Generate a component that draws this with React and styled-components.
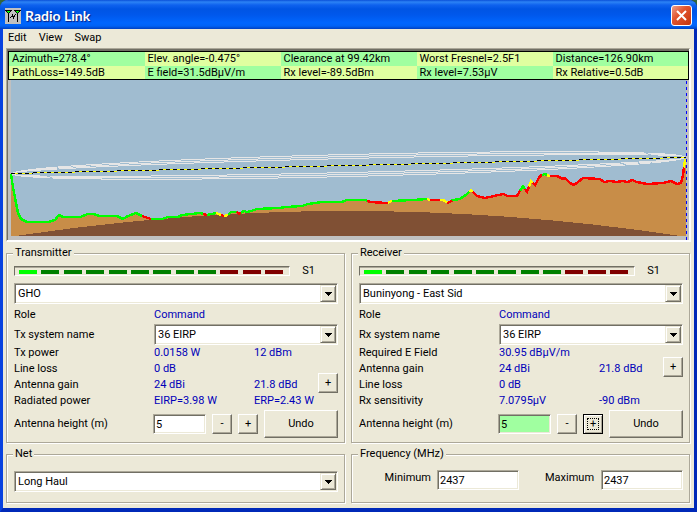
import React from "react";
import styled, { createGlobalStyle } from "styled-components";

const FACE = "#ece9d8";
const SHADE = "#aca899";
const DARK = "#716f64";

const GlobalStyle = createGlobalStyle`
  *, *::before, *::after { box-sizing: border-box; }
  body {
    margin: 0;
    background: #33663a;
    font-family: Roboto, "Liberation Sans", Arial, sans-serif;
    font-size: 11px;
    line-height: 16px;
    color: #000;
  }
  input, select, button { font: inherit; color: inherit; margin: 0; border-radius: 0; outline: 0; }
`;

const Window = styled.main`
  display: flex;
  flex-direction: column;
  min-height: 100vh;
  background: ${FACE};
  border: 3px solid #0842e0;
  border-top: 0;
  border-bottom-width: 4px;
  border-right-color: #0029b8;
  border-bottom-color: #0029b8;
  border-radius: 8px 8px 0 0;
`;

const TitleBar = styled.header`
  display: flex;
  align-items: center;
  gap: 4px;
  height: 29px;
  margin: 0 -3px;
  padding: 2px 5px 0;
  border-radius: 8px 8px 0 0;
  background: linear-gradient(
    #0a50d8 0, #2c83f5 2px, #0f62ee 5px, #0055e4 9px,
    #0058ec 15px, #0066fe 23px, #0062f5 26px, #0040c0 29px
  );
`;

const Title = styled.h1`
  flex: 1;
  margin: 0;
  color: #fff;
  font: bold 14px/18px Lato, "Open Sans", sans-serif;
  text-shadow: 1px 1px 1px #0b1f80;
`;

const CloseButton = styled.button`
  display: grid;
  place-items: center;
  width: 21px;
  height: 21px;
  padding: 0;
  border: 1px solid #fff;
  border-radius: 3px;
  background: linear-gradient(135deg, #eda08c, #e2552f 40%, #c5340c);
`;

const MenuBar = styled.nav`
  display: flex;
  gap: 12px;
  height: 19px;
  padding: 0 5px 1px;
`;

const MenuItem = styled.button`
  padding: 0;
  border: 0;
  background: none;
`;

const Body = styled.div`
  display: flex;
  flex-direction: column;
  flex: 1;
  gap: 4px;
  padding: 0 3px 4px;
`;

const PathPanel = styled.section`
  border: solid;
  border-width: 1px 2px 2px 1px;
  border-color: ${SHADE} #fff #fff ${SHADE};
  background: #c0c0c0;
`;

const PathInner = styled.div`
  border: solid ${DARK};
  border-width: 2px 0 0 1px;
`;

const Readings = styled.table`
  width: 100%;
  table-layout: fixed;
  border-collapse: collapse;
  border: 1px solid #000;
`;

const Reading = styled.td`
  height: 14px;
  padding: 0 0 0 3px;
  line-height: 13px;
  white-space: nowrap;
  background: ${(p) => (p.$green ? "#a0ffa0" : "#e0ffa0")};
`;

const Profile = styled.svg`
  display: block;
  width: 100%;
  height: 160px;
`;

const Columns = styled.div`
  display: grid;
  grid-template-columns: 1fr 1fr;
  gap: 6px;
  padding-right: 1px;
`;

const Group = styled.fieldset`
  min-width: 0;
  margin: 0;
  padding: 0 6px ${(p) => p.$bottom}px 7px;
  border: 1px solid ${SHADE};
  box-shadow: 1px 1px 0 #fff, inset 1px 1px 0 #fff;
`;

const Legend = styled.legend`
  height: 14px;
  padding: 0 2px;
  margin-left: -1px;
  line-height: 14px;
  background: ${FACE};
`;

const MeterRow = styled.div`
  display: flex;
  align-items: center;
  gap: 12px;
  height: 16px;
  margin-top: 3px;
  padding-right: 23px;
`;

const Meter = styled.div`
  display: flex;
  flex: 1;
  justify-content: space-between;
  height: 10px;
  padding: 3px 6px 1px 4px;
  border: 1px solid #fff;
  border-top-color: ${DARK};
  border-left-color: ${DARK};
  box-shadow: inset 0 1px 0 ${SHADE};
`;

const Segment = styled.span`
  width: 18px;
  height: 4px;
  background: ${(p) => p.$color};
`;

const SiteSlot = styled.div`
  padding-top: 4px;
`;

const Picker = styled.div`
  position: relative;
  height: 21px;
`;

const Select = styled.select`
  width: 100%;
  height: 21px;
  padding: 0 20px 0 3px;
  appearance: none;
  background: #fff;
  border: 1px solid;
  border-color: ${SHADE} #fff #fff ${SHADE};
  box-shadow: inset 1px 1px 0 ${DARK}, inset -1px -1px 0 ${FACE};
`;

const DropArrow = styled.span`
  position: absolute;
  top: 2px;
  right: 2px;
  bottom: 2px;
  display: grid;
  place-items: center;
  width: 16px;
  background: ${FACE};
  border: 1px solid;
  border-color: ${FACE} ${DARK} ${DARK} ${FACE};
  box-shadow: inset 1px 1px 0 #fff, inset -1px -1px 0 ${SHADE};
  pointer-events: none;
`;

const Fields = styled.div`
  display: grid;
  grid-template-columns: 140px minmax(0, 1fr);
  grid-template-rows: 19px 21px;
  align-items: center;
  margin-top: 1px;
`;

const Details = styled.div`
  display: grid;
  grid-template-columns: minmax(0, 1fr) 20px;
  height: 64px;
`;

const Figures = styled.dl`
  display: grid;
  grid-template-columns: 140px 100px minmax(0, 1fr);
  grid-auto-rows: 16px;
  margin: 0;
  white-space: nowrap;
`;

const Name = styled.dt`
  grid-column: 1;
`;

const Value = styled.dd`
  margin: 0;
  color: #0000b8;
`;

const Output = styled.output`
  color: #0000b8;
`;

const Push = styled.button`
  width: ${(p) => (p.$wide ? 74 : 20)}px;
  height: ${(p) => (p.$wide ? 28 : 20)}px;
  padding: 0;
  line-height: 14px;
  background: ${FACE};
  border: 1px solid;
  border-color: ${(p) => (p.$focus ? "#000" : `#fff ${DARK} ${DARK} #fff`)};
  box-shadow: ${(p) => (p.$focus ? "inset 1px 1px 0 #fff, " : "")}inset -1px -1px 0 ${SHADE};
`;

const FocusMark = styled.span`
  display: block;
  margin: 1px 3px;
  height: 12px;
  line-height: 10px;
  border: 1px dotted #000;
`;

const GainButton = styled(Push)`
  margin-top: ${(p) => (p.$row === 2 ? 28 : 12)}px;
`;

const HeightRow = styled.div`
  display: grid;
  grid-template-columns: 139px minmax(0, 1fr) 20px 20px 74px;
  column-gap: 6px;
  align-items: center;
  height: 28px;
  margin-top: 1px;

  & > label { margin-right: -6px; }
  & > input { margin-left: -6px; width: calc(100% + 6px); }
`;

const TextBox = styled.input`
  width: 100%;
  height: 20px;
  padding: 0 2px;
  background: ${(p) => (p.$changed ? "#a0ffa0" : "#fff")};
  border: 1px solid;
  border-color: ${SHADE} #fff #fff ${SHADE};
  box-shadow: inset 1px 1px 0 ${DARK}, inset -1px -1px 0 ${FACE};
`;

const NetRow = styled.div`
  padding-top: 10px;
`;

const FrequencyRow = styled.div`
  display: grid;
  grid-template-columns: auto 82px 82px 82px;
  justify-content: end;
  align-items: start;
  height: 31px;
  padding-top: 9px;

  & > label { padding-right: 6px; }
  & > label:nth-of-type(2) { padding: 0 0 0 26px; }
`;

const READINGS = [
  ["Azimuth=278.4°", "Elev. angle=-0.475°", "Clearance at 99.42km", "Worst Fresnel=2.5F1", "Distance=126.90km"],
  ["PathLoss=149.5dB", "E field=31.5dBµV/m", "Rx level=-89.5dBm", "Rx level=7.53µV", "Rx Relative=0.5dB"],
];

const SEGMENTS = ["#00ff00", ...Array(8).fill("#008000"), ...Array(3).fill("#800000")];

const TERRAIN = [
  [11, 174], [13, 187], [16, 203], [18, 213], [21, 219], [27, 222], [48, 222], [55, 220], [59, 215], [63, 217],
  [80, 217], [88, 214], [93, 214], [100, 216], [117, 216], [123, 219], [128, 216], [136, 213], [142, 216],
  [151, 219], [162, 219], [168, 217], [178, 217], [182, 215], [200, 213], [207, 215], [216, 213], [224, 216],
  [228, 215], [231, 212], [237, 212], [239, 214], [244, 211], [247, 212], [251, 211], [257, 209], [278, 208],
  [287, 207], [302, 206], [308, 204], [322, 202], [342, 202], [347, 200], [365, 200], [370, 202], [387, 203],
  [392, 201], [413, 200], [427, 199], [430, 200], [443, 200], [448, 203], [453, 200], [460, 199], [467, 194],
  [471, 190], [477, 196], [485, 198], [503, 194], [508, 196], [517, 196], [521, 189], [523, 186], [527, 192],
  [531, 181], [535, 185], [540, 176], [545, 174], [549, 176], [557, 176], [563, 179], [565, 178], [570, 183],
  [574, 185], [578, 182], [583, 178], [600, 179], [604, 182], [610, 181], [617, 182], [622, 181], [628, 182],
  [632, 180], [637, 182], [647, 184], [663, 183], [671, 181], [677, 184], [681, 183], [683, 175], [685, 160],
];

const STRETCHES = [
  [11, 142, "#0f0"], [142, 151, "#f00"], [151, 203, "#0f0"], [203, 207, "#f00"], [207, 216, "#0f0"],
  [216, 221, "#ff0"], [221, 224, "#f00"], [224, 228, "#ff0"], [228, 237, "#0f0"], [237, 241, "#f00"],
  [241, 367, "#0f0"], [367, 388, "#f00"], [388, 392, "#ff0"], [392, 427, "#0f0"], [427, 430, "#ff0"],
  [430, 440, "#f00"], [440, 447, "#ff0"], [447, 452, "#f00"], [452, 469, "#0f0"], [469, 473, "#ff0"],
  [473, 520, "#f00"], [520, 525, "#0f0"], [525, 529, "#f00"], [529, 533, "#ff0"], [533, 542, "#f00"],
  [542, 547, "#0f0"], [547, 550, "#ff0"], [550, 684, "#f00"], [684, 686, "#ff0"],
];

/* The direct path climbs one pixel every 42 across the plot. */
const SIGHT_LINE = Array.from({ length: 17 }, (_, i) => {
  const from = i === 0 ? 11 : 33 + (i - 1) * 42;
  const to = Math.min(33 + i * 42, 686);
  return { from, to, y: 173.5 - i };
});

function heightAt(x) {
  const i = TERRAIN.findIndex((p) => p[0] >= x);
  if (i < 0) return TERRAIN[TERRAIN.length - 1][1];
  if (i === 0) return TERRAIN[0][1];
  const [x0, y0] = TERRAIN[i - 1];
  const [x1, y1] = TERRAIN[i];
  return y0 + ((y1 - y0) * (x - x0)) / (x1 - x0);
}

function stretchPoints(from, to) {
  const inner = TERRAIN.filter((p) => p[0] > from && p[0] < to);
  return [[from, heightAt(from)], ...inner, [to, heightAt(to)]].map((p) => p.join(",")).join(" ");
}

function PathProfile() {
  const ground = TERRAIN.map((p) => p.join(",")).join(" ");
  return (
    <Profile viewBox="8 80 681 160" preserveAspectRatio="none" shapeRendering="crispEdges" role="img" aria-label="Path profile">
      <rect x="11" y="80" width="675" height="156" fill="#a0bcd0" />
      <polygon points={`11,236 ${ground} 686,160 686,236`} fill="#c88d48" />
      <path d="M15 236Q348 186 681 236Z" fill="#805034" />
      {[7, 9, 11].map((r) => (
        <ellipse key={r} cx="348.5" cy="165.5" rx="337" ry={r} fill="none" stroke="#e6e6e6" transform="rotate(-1.4 348.5 165.5)" />
      ))}
      {STRETCHES.map(([from, to, color]) => (
        <polyline key={from} points={stretchPoints(from, to)} fill="none" stroke={color} strokeWidth="2.4" />
      ))}
      {SIGHT_LINE.map(({ from, to, y }) => (
        <g key={from}>
          <line x1={from} y1={y} x2={to} y2={y} stroke="#ff0" />
          <line x1={from} y1={y} x2={to} y2={y} stroke="#000" strokeDasharray="4 3" />
        </g>
      ))}
      <line x1="686.5" y1="81" x2="686.5" y2="240" stroke="#00f" strokeDasharray="3 3" />
    </Profile>
  );
}

function AppIcon() {
  return (
    <svg width="16" height="16" viewBox="0 0 16 16" shapeRendering="crispEdges" aria-hidden="true">
      <rect width="16" height="16" fill="#c0c0c0" />
      <path d="M0 2h7v1H0zM9 2h7v1H9zM3 3h1v11H3zM12 3h1v11h-1z" fill="#000" />
      <path d="M1 3h1v1H1zM5 3h1v1H5zM10 3h1v1h-1zM14 3h1v1h-1zM2 4h1v1H2zM4 4h1v1H4zM11 4h1v1h-1zM13 4h1v1h-1z" fill="#000" />
      <path d="M2 3h3v1H2zM3 4h1v1H3zM11 3h3v1h-3zM12 4h1v1h-1z" fill="#0f0" />
      <path d="M5 9h1v1H5zM6 8h1v1H6zM7 6h1v3H7zM8 8h1v3H8zM9 7h1v2H9zM10 6h1v1h-1z" fill="#000" />
    </svg>
  );
}

function Dropdown({ label, value, id }) {
  return (
    <Picker>
      <Select id={id} aria-label={label} defaultValue={value}>
        <option>{value}</option>
      </Select>
      <DropArrow>
        <svg width="7" height="4" viewBox="0 0 7 4" shapeRendering="crispEdges" aria-hidden="true">
          <path d="M0 0h7v1H6v1H5v1H4v1H3V3H2V2H1V1H0z" />
        </svg>
      </DropArrow>
    </Picker>
  );
}

function Station({ title, prefix, site, figures, gainRow, changed }) {
  return (
    <Group $bottom={4}>
      <Legend>{title}</Legend>
      <MeterRow>
        <Meter role="img" aria-label="Signal level">
          {SEGMENTS.map((color, i) => <Segment key={i} $color={color} />)}
        </Meter>
        <span>S1</span>
      </MeterRow>
      <SiteSlot><Dropdown label={`${title} site`} value={site} /></SiteSlot>
      <Fields>
        <span>Role</span>
        <Output>Command</Output>
        <label htmlFor={`${prefix}-system`}>{prefix} system name</label>
        <Dropdown id={`${prefix}-system`} value="36 EIRP" />
      </Fields>
      <Details>
        <Figures>
          {figures.map(([name, ...values]) => (
            <React.Fragment key={name}>
              <Name>{name}</Name>
              {values.map((v) => <Value key={v}>{v}</Value>)}
            </React.Fragment>
          ))}
        </Figures>
        <GainButton $row={gainRow} type="button" aria-label="Change antenna gain">+</GainButton>
      </Details>
      <HeightRow>
        <label htmlFor={`${prefix}-height`}>Antenna height (m)</label>
        <TextBox id={`${prefix}-height`} $changed={changed} defaultValue="5" />
        <Push type="button">-</Push>
        <Push type="button" $focus={changed}>{changed ? <FocusMark>+</FocusMark> : "+"}</Push>
        <Push type="button" $wide>Undo</Push>
      </HeightRow>
    </Group>
  );
}

export default function App() {
  return (
    <>
      <GlobalStyle />
      <Window>
        <TitleBar>
          <AppIcon />
          <Title>Radio Link</Title>
          <CloseButton type="button" aria-label="Close">
            <svg width="13" height="13" viewBox="0 0 13 13" aria-hidden="true">
              <path d="M2 2l9 9M11 2l-9 9" stroke="#fff" strokeWidth="2" />
            </svg>
          </CloseButton>
        </TitleBar>
        <MenuBar>
          <MenuItem type="button">Edit</MenuItem>
          <MenuItem type="button">View</MenuItem>
          <MenuItem type="button">Swap</MenuItem>
        </MenuBar>
        <Body>
          <PathPanel>
            <PathInner>
              <Readings>
                <tbody>
                  {READINGS.map((row, r) => (
                    <tr key={r}>
                      {row.map((text, c) => <Reading key={c} $green={(r + c) % 2 === 0}>{text}</Reading>)}
                    </tr>
                  ))}
                </tbody>
              </Readings>
              <PathProfile />
            </PathInner>
          </PathPanel>
          <Columns>
            <Station
              title="Transmitter"
              prefix="Tx"
              site="GHO"
              gainRow={2}
              figures={[
                ["Tx power", "0.0158 W", "12 dBm"],
                ["Line loss", "0 dB"],
                ["Antenna gain", "24 dBi", "21.8 dBd"],
                ["Radiated power", "EIRP=3.98 W", "ERP=2.43 W"],
              ]}
            />
            <Station
              title="Receiver"
              prefix="Rx"
              site="Buninyong - East Sid"
              gainRow={1}
              changed
              figures={[
                ["Required E Field", "30.95 dBµV/m"],
                ["Antenna gain", "24 dBi", "21.8 dBd"],
                ["Line loss", "0 dB"],
                ["Rx sensitivity", "7.0795µV", "-90 dBm"],
              ]}
            />
          </Columns>
          <Columns>
            <Group $bottom={10}>
              <Legend>Net</Legend>
              <NetRow><Dropdown label="Net" value="Long Haul" /></NetRow>
            </Group>
            <Group $bottom={10}>
              <Legend>Frequency (MHz)</Legend>
              <FrequencyRow>
                <label htmlFor="minimum">Minimum</label>
                <TextBox id="minimum" defaultValue="2437" />
                <label htmlFor="maximum">Maximum</label>
                <TextBox id="maximum" defaultValue="2437" />
              </FrequencyRow>
            </Group>
          </Columns>
        </Body>
      </Window>
    </>
  );
}
